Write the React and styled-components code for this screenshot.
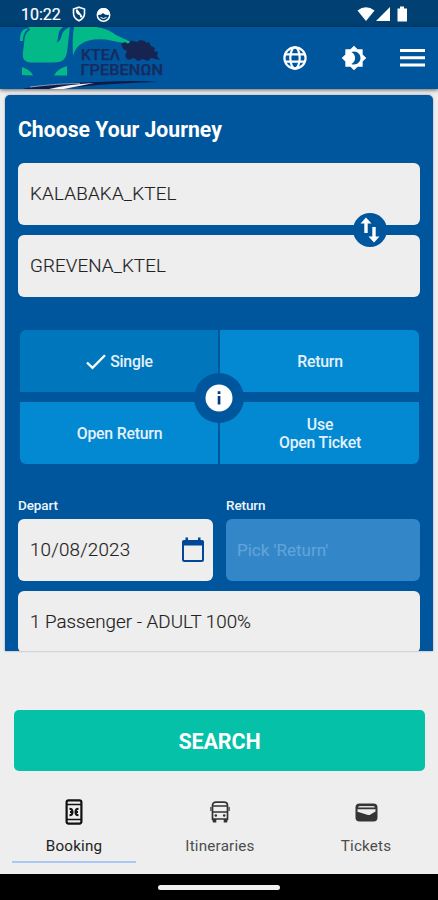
import React from 'react';
import styled, { createGlobalStyle } from 'styled-components';

const GlobalStyle = createGlobalStyle`
  *, *::before, *::after { box-sizing: border-box; }
  body { margin: 0; background: #eeeeee; }
  button { border: 0; padding: 0; margin: 0; font: inherit; color: inherit; background: none; }
`;

const Screen = styled.div`
  width: 438px;
  height: 900px;
  display: flex;
  flex-direction: column;
  overflow: hidden;
  background: #eeeeee;
  font-family: Roboto, 'Liberation Sans', sans-serif;
`;

const StatusBar = styled.div`
  height: 27px;
  flex: none;
  display: flex;
  align-items: center;
  justify-content: space-between;
  padding: 1px 29px 0 21px;
  background: #004072;
  color: #fff;
`;

const StatusGroup = styled.div`
  display: flex;
  align-items: center;
  gap: 10px;
`;

const Clock = styled.span`
  font-size: 16px;
  line-height: 20px;
  width: 41px;
  padding-top: 1px;
  -webkit-text-stroke: 0.2px currentColor;
`;

const Header = styled.header`
  height: 62px;
  flex: none;
  display: flex;
  align-items: center;
  justify-content: space-between;
  padding: 0 12px 0 18px;
  background: #00569c;
  color: #fff;
  box-shadow: 0 1px 4px rgba(0, 0, 0, 0.6);
`;

const HeaderActions = styled.div`
  display: flex;
  align-items: center;
  gap: 31px;
`;

const IconButton = styled.button`
  display: flex;
  width: ${(p) => p.$w}px;
  height: 28px;
  align-items: center;
  justify-content: center;
`;

const Card = styled.main`
  height: 556px;
  flex: none;
  margin: 6px 5px 0;
  padding: 0 13px;
  border-radius: 5px 5px 0 0;
  background: #00569c;
  box-shadow: 0 0 2px rgba(50, 60, 110, 0.55);
  overflow: hidden;
`;

const Title = styled.h1`
  margin: 0;
  height: 68px;
  line-height: 69px;
  font-size: 21.2px;
  font-weight: 700;
  color: #fff;
  white-space: nowrap;
`;

const RouteFields = styled.div`
  position: relative;
  display: flex;
  flex-direction: column;
  gap: 10px;
`;

const Field = styled.div`
  height: 62px;
  display: flex;
  align-items: center;
  justify-content: space-between;
  padding: 0 8px ${(p) => (p.$raised || p.$disabled ? 1 : 0)}px ${(p) => (p.$disabled ? 11 : 12)}px;
  border-radius: 6px;
  background: ${(p) => (p.$disabled ? '#3387c9' : '#eeeeee')};
  color: ${(p) => (p.$disabled ? '#62a3d8' : '#222')};
  font-size: ${(p) => (p.$disabled ? 17 : 18.8)}px;
  letter-spacing: ${(p) => p.$ls || 0}px;
  font-weight: ${(p) => (p.$disabled ? 400 : 300)};
  -webkit-text-stroke: 0.15px currentColor;
  white-space: nowrap;
`;

const SwapButton = styled.button`
  position: absolute;
  right: 33px;
  top: 50px;
  width: 34px;
  height: 34px;
  border-radius: 50%;
  background: #00569c;
  display: flex;
  align-items: center;
  justify-content: center;
`;

const TripTypes = styled.div`
  position: relative;
  margin: 33px 1px 0 2px;
  display: grid;
  grid-template-columns: 198px 199px;
  grid-template-rows: 62px 62px;
  column-gap: 2px;
  row-gap: 10px;
  border-radius: 6px;
  overflow: hidden;
`;

const TripType = styled.button`
  display: flex;
  align-items: center;
  justify-content: center;
  gap: 4px;
  padding: 2px 0 0 1px;
  background: ${(p) => (p.$selected ? '#0077bd' : '#0389d1')};
  color: #e4f1fc;
  font-size: 15.8px;
  font-weight: 500;
  line-height: 18px;
  text-align: center;
  letter-spacing: -0.2px;
`;

const InfoButton = styled.button`
  position: absolute;
  left: 174px;
  top: 42.5px;
  width: 50px;
  height: 50px;
  border-radius: 50%;
  background: #00569c;
  display: flex;
  align-items: center;
  justify-content: center;
`;

const DateRow = styled.div`
  margin-top: 33px;
  display: grid;
  grid-template-columns: 195px 194px;
  column-gap: 13px;
`;

const DateLabel = styled.div`
  height: 22px;
  line-height: 17px;
  font-size: 13.5px;
  font-weight: 500;
  color: #eef5fc;
  letter-spacing: -0.1px;
`;

const PassengerRow = styled.div`
  margin-top: 10px;
`;

const SearchButton = styled.button`
  flex: none;
  height: 61px;
  margin: 59px 13px 0 14px;
  padding-top: 1px;
  border-radius: 5px;
  background: #04c1a7;
  color: #fff;
  font-size: 21.5px;
  font-weight: 700;
  letter-spacing: -0.1px;
`;

const TabBar = styled.nav`
  flex: none;
  height: 103px;
  padding: 26px 0 0 1px;
  display: grid;
  grid-template-columns: repeat(3, 146px);
`;

const Tab = styled.button`
  display: flex;
  flex-direction: column;
  align-items: center;
  justify-self: center;
  width: 124px;
  height: 66px;
  border-bottom: 2px solid ${(p) => (p.$active ? '#a9c8f3' : 'transparent')};
  color: ${(p) => (p.$active ? '#222' : '#4c4c4c')};
  font-size: 15.2px;
  letter-spacing: 0.2px;
`;

const TabIcon = styled.span`
  display: flex;
  height: 30px;
  align-items: center;
`;

const TabLabel = styled.span`
  margin-top: 9px;
  line-height: 20px;
`;

const GestureBar = styled.footer`
  flex: 1;
  display: flex;
  justify-content: center;
  align-items: center;
  background: #000;
`;

const GesturePill = styled.div`
  width: 122px;
  height: 5px;
  border-radius: 3px;
  background: #f0f0f0;
`;

function Logo() {
  return (
    <svg width="150" height="62" viewBox="18 27 150 62">
      <g fill="#04b988">
        <path d="M28 27 L63 27 Q58.500 30 58.300 36 Q58 40 56.500 42.500 Q60.500 41 61.500 36 Q62.500 30 70 27 Q69.500 30 68.800 37 L67 52 Q66 59 61 61.500 Q58 62.500 52 62.500 L30 62.500 Q22.500 62 22.800 54 L24.500 39 Q25 33 30 29.500Z" />
        <path d="M20 41 Q19.500 29 27 28.500 L29 28.500 Q23 32 22.800 41Z" />
        <path d="M74 27 L96 27 Q107 28 116 35 L131 42 L129 43.500 Q116 42 106 39.500 Q89 38 81 44 Q75 48 73 56 Q72 38 74 27Z" />
        <path d="M22 67 Q31 70 33 75.500 L22 75Z" />
        <path d="M67 66 L67 75.500 L54 75.500 Q57 69 67 66Z" />
      </g>
      <path
        fill="#172451"
        d="M121 44 L125 42 L128 44 L131 40.500 L137 42 L140 40 L145 41 L146 43 L149 42 L151 46 L155 48 L154 51 L158 52 L157 56 L160 60 L151 58 L148 61 L143 59 L138 61 L134 58 L128 60 L125 56 L127 51 L123 49Z"
      />
      <g fill="#172b5e" stroke="#172b5e" strokeWidth="0.250" fontFamily="Roboto, sans-serif" fontWeight="500">
        <text x="81" y="60" fontSize="15" textLength="39" lengthAdjust="spacingAndGlyphs">ΚΤΕΛ</text>
        <text x="80.500" y="75" fontSize="15" textLength="82.500" lengthAdjust="spacingAndGlyphs">ΓΡΕΒΕΝΩΝ</text>
      </g>
      <path fill="#101b48" d="M24 88.500 Q55 83 100 82 Q133 80 158 82 Q125 83 98 85 L57 89 L24 89Z" />
      <path fill="#f4f6fb" d="M49 89 Q67 84.500 94 83 Q79 86 64 89Z" />
      <path fill="none" stroke="#d5deef" strokeWidth="0.600" d="M30 87 Q58 83.500 80 83.500" />
    </svg>
  );
}

function ShieldIcon() {
  return (
    <svg width="14" height="16" viewBox="0 0 14 16" fill="none" stroke="#fff" strokeWidth="1.600">
      <path d="M7 1.200 L12.500 3 V7.500 Q12.500 12 7 14.800 Q1.500 12 1.500 7.500 V3Z" />
      <path d="M4.500 4.500 Q5 8 7.300 8.300 Q9.500 9 8.800 11.500 M4.500 3.500 L10 11" />
    </svg>
  );
}

function FaceIcon() {
  return (
    <svg width="15" height="15" viewBox="0 0 15 15">
      <circle cx="7.500" cy="8" r="6.200" fill="none" stroke="#fff" strokeWidth="1.500" />
      <path fill="#fff" d="M1.500 6 Q2.500 1 7.500 1 Q12.500 1 13.500 6 L12.500 8 Q9 8.500 7 6 Q5 8.500 1.500 8Z" />
      <path d="M4.500 10.500 Q7.500 12.500 10.500 10.500" stroke="#fff" fill="none" />
    </svg>
  );
}

function SignalIcons() {
  return (
    <svg width="52" height="17" viewBox="0 0 52 17" fill="#fff">
      <path d="M0.500 4.500 Q9 -2 17.500 4.500 L9 15Z" />
      <path d="M19 15 L33 1 V15Z" />
      <path d="M40.500 2.500 H43 V0.500 H47 V2.500 H50 V15.500 H40.500Z" />
    </svg>
  );
}

function GlobeIcon() {
  return (
    <svg width="24" height="24" viewBox="0 0 24 24" fill="none" stroke="#fff" strokeWidth="2.200">
      <circle cx="12" cy="12" r="10.600" />
      <ellipse cx="12" cy="12" rx="4.700" ry="10.600" />
      <path d="M2.500 8.300h19M2.500 15.700h19" />
    </svg>
  );
}

function BrightnessIcon() {
  return (
    <svg width="26" height="26" viewBox="0 0 24 24" fill="#fff">
      <path d="M20 8.690V4h-4.690L12 .690 8.690 4H4v4.690L.690 12 4 15.310V20h4.690L12 23.310 15.310 20H20v-4.690L23.310 12 20 8.690zM12 18c-.890 0-1.740-.200-2.500-.550C11.560 16.500 13 14.420 13 12s-1.440-4.500-3.500-5.450C10.260 6.200 11.110 6 12 6c3.310 0 6 2.690 6 6s-2.690 6-6 6z" />
    </svg>
  );
}

function MenuIcon() {
  return (
    <svg width="25" height="18" viewBox="0 0 25 18" fill="#fff">
      <path d="M0 0h25v3H0zM0 7.300h25v3H0zM0 14.600h25v3H0z" />
    </svg>
  );
}

function SwapIcon() {
  return (
    <svg width="20" height="26" viewBox="0 0 20 26" fill="#fff">
      <path d="M6 0.500 L11.500 6.500 H7.700 V16 H4.300 V6.500 H0.500Z" />
      <path d="M14 25.500 L8.500 19.500 H12.300 V10 H15.700 V19.500 H19.500Z" />
    </svg>
  );
}

function InfoIcon() {
  return (
    <svg width="28" height="28" viewBox="0 0 28 28">
      <circle cx="14" cy="14" r="13.500" fill="#fff" />
      <path fill="#003b87" d="M12.700 7.300h2.700v2.700h-2.700zM12.700 12h2.700v8.500h-2.700z" />
    </svg>
  );
}

function CheckIcon() {
  return (
    <svg width="20" height="16" viewBox="0 0 20 16">
      <path d="M1 8.500 L6.500 13.800 L19 1.300" fill="none" stroke="#fff" strokeWidth="2.300" />
    </svg>
  );
}

function CalendarIcon() {
  return (
    <svg width="24" height="26" viewBox="0 0 24 26">
      <path d="M2 5.500 H22 V22.500 Q22 24 20.500 24 H3.500 Q2 24 2 22.500Z" fill="none" stroke="#00479a" strokeWidth="2" />
      <path d="M1 8.500 V5 Q1 3 3 3 H4.500 V0.500 H7 V3 H17 V0.500 H19.500 V3 H21 Q23 3 23 5 V8.500Z" fill="#00479a" />
    </svg>
  );
}

function BookingIcon() {
  return (
    <svg width="18" height="26" viewBox="0 0 18 26" fill="none" stroke="#111" strokeWidth="2.200">
      <rect x="1.600" y="1.400" width="14.800" height="23.200" rx="2" />
      <path d="M1.500 5.500h15M1.500 20.500h15" strokeWidth="1.700" />
      <path d="M4.500 9.700q3 0 3 3.300t-3 3.300M13.500 9.700q-3 0-3 3.300t3 3.300M5 13h3M10 13h3" strokeWidth="2" />
    </svg>
  );
}

function BusIcon() {
  return (
    <svg width="20" height="22" viewBox="0 0 20 22" fill="none" stroke="#333" strokeWidth="1.700">
      <path d="M2.500 18V4.500Q2.500 1.200 6 1.200h8q3.500 0 3.500 3.300V18zM2.500 5h15M2.500 11h15" />
      <path d="M0.900 6v4M19.100 6v4" strokeWidth="1.200" />
      <path fill="#333" stroke="none" d="M2 18h4.300v3.500H3zM13.700 18H18l-1 3.500h-3.300z" />
      <circle cx="5.800" cy="14.500" r="1.300" fill="#333" stroke="none" />
      <circle cx="14.200" cy="14.500" r="1.300" fill="#333" stroke="none" />
    </svg>
  );
}

function WalletIcon() {
  return (
    <svg width="23" height="19" viewBox="0 0 23 19">
      <rect x="0.500" y="0.500" width="22" height="18" rx="4" fill="#353535" />
      <path d="M3 4.500 Q3 3 5 3h13q2 0 2 1.500z" fill="#ddd" />
      <path d="M2.500 6.200h18v2.300l-5.500 3.300q-1 .500-2 .200L2.500 8.700z" fill="#eee" />
    </svg>
  );
}

const tabs = [
  { label: 'Booking', icon: <BookingIcon />, active: true },
  { label: 'Itineraries', icon: <BusIcon /> },
  { label: 'Tickets', icon: <WalletIcon /> },
];

export default function App() {
  return (
    <Screen>
      <GlobalStyle />
      <StatusBar>
        <StatusGroup>
          <Clock>10:22</Clock>
          <ShieldIcon />
          <FaceIcon />
        </StatusGroup>
        <SignalIcons />
      </StatusBar>
      <Header>
        <Logo />
        <HeaderActions>
          <IconButton $w={28} aria-label="Language"><GlobeIcon /></IconButton>
          <IconButton $w={28} aria-label="Theme"><BrightnessIcon /></IconButton>
          <IconButton $w={27} aria-label="Menu"><MenuIcon /></IconButton>
        </HeaderActions>
      </Header>
      <Card>
        <Title>Choose Your Journey</Title>
        <RouteFields>
          <Field $ls={0.2}>KALABAKA_KTEL</Field>
          <Field $ls={0.1}>GREVENA_KTEL</Field>
          <SwapButton aria-label="Swap"><SwapIcon /></SwapButton>
        </RouteFields>
        <TripTypes>
          <TripType $selected><CheckIcon />Single</TripType>
          <TripType>Return</TripType>
          <TripType>Open Return</TripType>
          <TripType>Use<br />Open Ticket</TripType>
          <InfoButton aria-label="Info"><InfoIcon /></InfoButton>
        </TripTypes>
        <DateRow>
          <div>
            <DateLabel>Depart</DateLabel>
            <Field $raised $ls={0.2}>
              10/08/2023
              <CalendarIcon />
            </Field>
          </div>
          <div>
            <DateLabel>Return</DateLabel>
            <Field $disabled>Pick 'Return'</Field>
          </div>
        </DateRow>
        <PassengerRow>
          <Field>1 Passenger - ADULT 100%</Field>
        </PassengerRow>
      </Card>
      <SearchButton>SEARCH</SearchButton>
      <TabBar>
        {tabs.map((t) => (
          <Tab key={t.label} $active={t.active}>
            <TabIcon>{t.icon}</TabIcon>
            <TabLabel>{t.label}</TabLabel>
          </Tab>
        ))}
      </TabBar>
      <GestureBar>
        <GesturePill />
      </GestureBar>
    </Screen>
  );
}
